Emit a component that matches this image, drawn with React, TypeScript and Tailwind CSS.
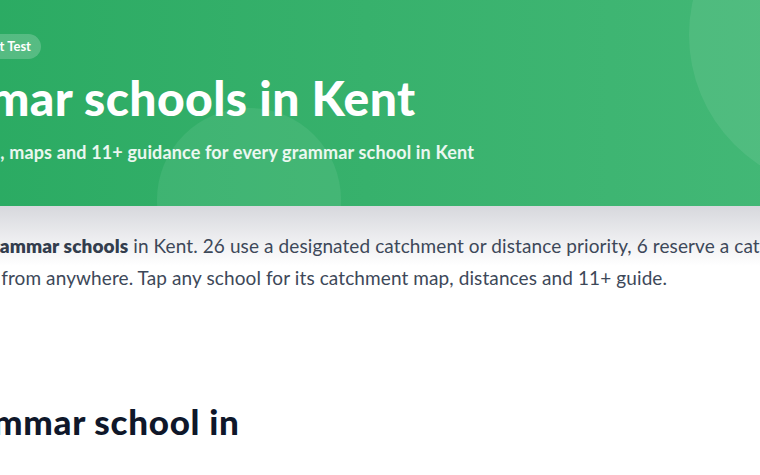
import React from 'react';

const Hero = () => {
  return (
    <header className="relative h-[206px] overflow-hidden bg-gradient-to-r from-[#27a960] to-[#48bb7b]">
      {/* decorative circles */}
      <div className="absolute left-[278px] top-[108px] h-[184px] w-[184px] rounded-full bg-white/[0.07]" />
      <div className="absolute left-[810px] top-[-120px] h-[310px] w-[310px] rounded-full bg-white/[0.08]" />

      <div className="relative pt-[33px]">
        <span className="ml-[88px] inline-flex h-[25px] items-center rounded-full bg-white/20 px-[10px] text-[13px] font-bold text-white">
          Kent Test
        </span>
        <h1 className="-ml-[9px] mt-[14px] text-[48px] font-black leading-[1.05] tracking-[0.4px] text-white">
          Grammar schools in Kent
        </h1>
        <p className="-ml-[8px] mt-[14px] text-[18px] font-bold leading-[28px] tracking-[0.15px] text-white/90">
          Catchment data, maps and 11+ guidance for every grammar school in Kent
        </p>
      </div>
    </header>
  );
};

export default function App() {
  return (
    <div className="h-[475px] w-full overflow-hidden bg-white font-['Lato',sans-serif]">
      <div className="-ml-[121px] w-[1100px]">
        <Hero />

        <section className="bg-[linear-gradient(to_bottom,#d7d8dd,#ffffff_60px)] pt-[24px]">
          <p className="-ml-[9px] whitespace-nowrap text-[19px] leading-[32px] tracking-[0.1px] text-[#3d4859]">
            There are 32 <strong className="font-extrabold text-[#333d4d]">grammar schools</strong> in Kent. 26 use a
            designated catchment or distance priority, 6 reserve a catchment quota
            <br />
            and fill the rest from anywhere. Tap any school for its catchment map, distances and 11+ guide.
          </p>

          <h2 className="mt-[107px] pl-[56px] text-[35px] font-black leading-[40px] tracking-[0.7px] text-[#0f172a]">
            Grammar school in
          </h2>
        </section>
      </div>
    </div>
  );
}
